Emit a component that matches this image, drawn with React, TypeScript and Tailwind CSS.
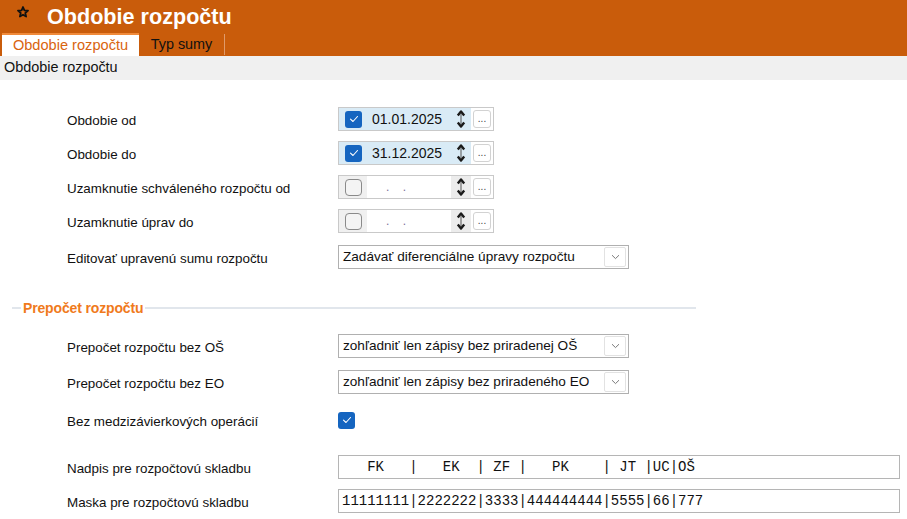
import React from 'react';

// Obdobie rozpočtu – nastavenia

const CheckIcon = () => (
  <svg width="10" height="8" viewBox="0 0 10 8" fill="none">
    <path d="M1.5 4.2 L4 6.5 L8.5 1.5" stroke="white" strokeWidth="1.1" strokeLinecap="round" strokeLinejoin="round" />
  </svg>
);

const SpinIcon = () => (
  <svg width="10" height="20" viewBox="0 0 10 20" fill="none">
    <path d="M1.8 6.5 L5 2.5 L8.2 6.5" stroke="#1a1a1a" strokeWidth="2.4" strokeLinejoin="round" />
    <path d="M5 5 L5 15" stroke="#555" strokeWidth="1" />
    <path d="M1.8 13.5 L5 17.5 L8.2 13.5" stroke="#1a1a1a" strokeWidth="2.4" strokeLinejoin="round" />
  </svg>
);

const Chevron = () => (
  <svg width="9" height="6" viewBox="0 0 9 6" fill="none">
    <path d="M1 1.2 L4.5 4.6 L8 1.2" stroke="#7a7a7a" strokeWidth="1" />
  </svg>
);

const Checkbox = ({ checked }: { checked: boolean }) =>
  checked ? (
    <div className="w-[17px] h-[17px] rounded-[3px] bg-[#1565c0] flex items-center justify-center">
      <CheckIcon />
    </div>
  ) : (
    <div className="w-[17px] h-[17px] rounded-[4px] border border-[#8a8a8a] bg-[#f4f4f4]" />
  );

const DateField = ({ value }: { value?: string }) => {
  const checked = !!value;
  return (
    <div
      className={`w-[156px] h-[24px] border border-[#c9c9c9] flex items-stretch ${
        checked ? 'bg-[#d9ebf6]' : 'bg-white'
      }`}
    >
      <div className={`w-[28px] flex items-center pl-[6px] ${checked ? '' : 'bg-[#f0f0f0]'}`}>
        <Checkbox checked={checked} />
      </div>
      <div className="flex-1 flex items-center pl-[5px] text-[14px]">
        {checked ? (
          <span className="text-[#111]">{value}</span>
        ) : (
          <span className="whitespace-pre text-[#7b6f9a] pl-[14px] text-[12px]">.    .</span>
        )}
      </div>
      <div className={`w-[20px] flex items-center justify-center ${checked ? '' : 'bg-[#ececec]'}`}>
        <SpinIcon />
      </div>
      <div className="w-[22px] flex items-center justify-center bg-white">
        <div className="w-[18px] h-[18px] rounded-[3px] border border-[#d2d2d2] bg-white flex items-end justify-center pb-[3px]">
          <span className="text-[10px] leading-none text-[#444]">...</span>
        </div>
      </div>
    </div>
  );
};

const Select = ({ value }: { value: string }) => (
  <div className="w-[291px] h-[24px] border border-[#b0b0b0] bg-white flex items-center pl-[4px] pr-[2px]">
    <span className="flex-1 text-[13.6px] text-[#111]">{value}</span>
    <div className="w-[22px] h-[20px] border border-[#e2e2e2] rounded-[2px] flex items-center justify-center">
      <Chevron />
    </div>
  </div>
);

const Row = ({ label, mt, children }: { label: string; mt: string; children: React.ReactNode }) => (
  <div className={`flex items-center h-[24px] pl-[67px] ${mt}`}>
    <div className="w-[271px] pt-[5px] text-[13.4px] text-[#111]">{label}</div>
    {children}
  </div>
);

export default function App() {
  return (
    <div className="w-[907px] h-[519px] bg-white overflow-hidden font-['Liberation_Sans',Arial,sans-serif]">
      {/* hlavička */}
      <div className="bg-[#c95c0b]">
        <div className="h-[33px] flex items-start">
          <svg className="ml-[17px] mt-[6px]" width="12" height="12" viewBox="0 0 12 12" fill="none">
            <path
              d="M6 1 L7.4 4.3 L11 4.6 L8.3 7 L9.1 10.6 L6 8.7 L2.9 10.6 L3.7 7 L1 4.6 L4.6 4.3 Z"
              stroke="#111"
              strokeWidth="1.8"
              strokeLinejoin="round"
              fill="#c95c0b"
            />
          </svg>
          <h1 className="ml-[18px] mt-[4px] text-[21.6px] leading-[26px] font-bold text-white">Obdobie rozpočtu</h1>
        </div>
        <div className="h-[23px] flex items-stretch">
          <div className="ml-[2px] w-[137px] bg-white border-t-2 border-[#f08a3a] flex items-center justify-center pt-[1px] text-[14.6px] text-[#d9640f]">
            Obdobie rozpočtu
          </div>
          <div className="w-[86px] flex items-center justify-center pt-[1px] text-[14.4px] text-[#111] border-r border-[#e09a6a] my-[1px]">
            Typ sumy
          </div>
        </div>
      </div>

      <div className="h-[24px] bg-[#f0f0f0] flex items-center px-[4px] text-[14.4px] text-[#111]">Obdobie rozpočtu</div>

      <Row label="Obdobie od" mt="mt-[27px]">
        <DateField value="01.01.2025" />
      </Row>
      <Row label="Obdobie do" mt="mt-[10px]">
        <DateField value="31.12.2025" />
      </Row>
      <Row label="Uzamknutie schváleného rozpočtu od" mt="mt-[10px]">
        <DateField />
      </Row>
      <Row label="Uzamknutie úprav do" mt="mt-[10px]">
        <DateField />
      </Row>
      <Row label="Editovať upravenú sumu rozpočtu" mt="mt-[12px]">
        <Select value="Zadávať diferenciálne úpravy rozpočtu" />
      </Row>

      {/* Prepočet rozpočtu */}
      <div className="mt-[29px] w-[696px] pl-[12px] flex items-center h-[20px]">
        <div className="w-[9px] h-[2px] bg-[#e1e6ec]" />
        <span className="px-[2px] text-[14px] font-bold tracking-[-0.15px] text-[#f07a1c]">Prepočet rozpočtu</span>
        <div className="flex-1 h-[2px] bg-[#e1e6ec]" />
      </div>

      <Row label="Prepočet rozpočtu bez OŠ" mt="mt-[16px]">
        <Select value="zohľadniť len zápisy bez priradenej OŠ" />
      </Row>
      <Row label="Prepočet rozpočtu bez EO" mt="mt-[12px]">
        <Select value="zohľadniť len zápisy bez priradeného EO" />
      </Row>
      <Row label="Bez medzizávierkových operácií" mt="mt-[14px]">
        <Checkbox checked />
      </Row>
      <Row label="Nadpis pre rozpočtovú skladbu" mt="mt-[23px]">
        <div className="w-[562px] h-[24px] border border-[#b5b5b5] bg-white flex items-center pl-[3px] font-['Liberation_Mono','Courier_New',monospace] text-[14px] text-[#111] whitespace-pre">
          {'   FK   |   EK  | ZF |   PK    | JT |UC|OŠ'}
        </div>
      </Row>
      <Row label="Maska pre rozpočtovú skladbu" mt="mt-[10px]">
        <div className="w-[562px] h-[24px] border border-[#b5b5b5] bg-white flex items-center pl-[3px] font-['Liberation_Mono','Courier_New',monospace] text-[14px] text-[#111] whitespace-pre">
          11111111|2222222|3333|444444444|5555|66|777
        </div>
      </Row>
    </div>
  );
}
